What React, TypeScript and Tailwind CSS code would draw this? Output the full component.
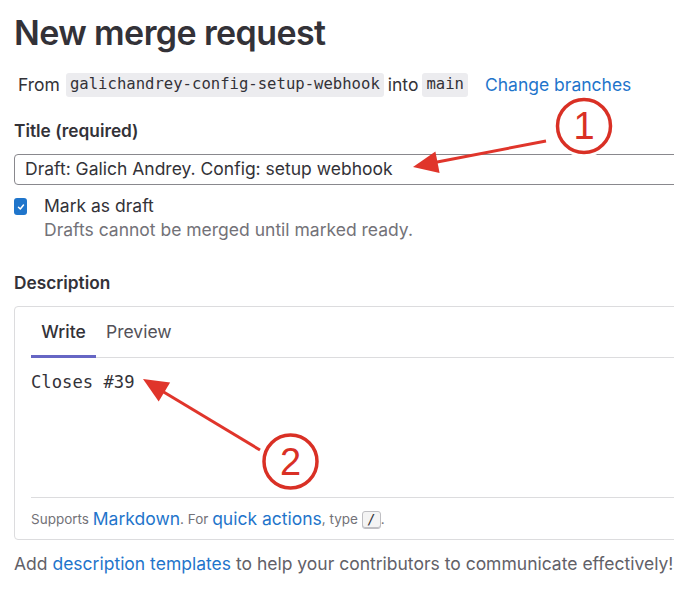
import React from "react";

export default function App() {
  return (
    <div className="relative w-[674px] h-[596px] overflow-hidden bg-white text-[#333238]" style={{ fontFamily: "Inter, 'Noto Sans', sans-serif" }}>
      <div className="w-[760px] pl-[14px]">
        <h1 className="mt-[13px] text-[34px] leading-[40px] font-semibold tracking-[-0.6px] text-[#333238]">New merge request</h1>
        <div className="mt-[20px] flex items-center h-[24px] text-[17.5px] text-[#333238] pl-[4px]">
          <span>From</span>
          <code className="ml-[6px] px-[4px] h-[24px] flex items-center rounded-[3px] bg-[#ececef] text-[15.6px]" style={{ fontFamily: "'DejaVu Sans Mono', monospace" }}>galichandrey-config-setup-webhook</code>
          <span className="ml-[4px]">into</span>
          <code className="ml-[4px] px-[4px] h-[24px] flex items-center rounded-[3px] bg-[#ececef] text-[15.6px]" style={{ fontFamily: "'DejaVu Sans Mono', monospace" }}>main</code>
          <span className="ml-[17px] text-[#1f75cb]">Change branches</span>
        </div>
        <div className="mt-[22px] text-[17.3px] leading-[24px] font-semibold">Title (required)</div>
        <div className="mt-[11px] h-[31px] border border-[#89888d] rounded-[4px] flex items-center pl-[10px] text-[17.5px] text-[#333238]">
          Draft: Galich Andrey. Config: setup webhook
        </div>
        <div className="mt-[9px] flex">
          <div className="mt-[4px] w-[13px] h-[17px] rounded-[3px] bg-[#1f75cb] flex items-center justify-center">
            <svg width="8" height="8" viewBox="0 0 8 8"><path d="M1.5 4.2 L3.3 6 L6.5 2" stroke="white" strokeWidth="1.5" fill="none" strokeLinecap="round" strokeLinejoin="round" /></svg>
          </div>
          <div className="ml-[17px]">
            <div className="text-[17.5px] leading-[24px]">Mark as draft</div>
            <div className="text-[17.5px] leading-[24px] text-[#737278]">Drafts cannot be merged until marked ready.</div>
          </div>
        </div>
        <div className="mt-[29px] text-[17.3px] leading-[24px] font-semibold">Description</div>
        <div className="mt-[11px] h-[234px] border border-[#dcdcde] rounded-[4px] flex flex-col pl-[16px]">
          <div className="h-[51px] border-b border-[#dcdcde] flex items-stretch text-[17.5px]">
            <div className="w-[65px] flex items-center justify-center border-b-[3px] border-[#6666c4] -mb-[1px] pt-[3px] font-medium">Write</div>
            <div className="px-[10px] flex items-center text-[#535158]">Preview</div>
          </div>
          <div className="flex-1 border-b border-[#dcdcde] pt-[12px] text-[17.2px]" style={{ fontFamily: "'DejaVu Sans Mono', monospace" }}>
            <span>Closes #39</span>
          </div>
          <div className="h-[41px] flex items-center pt-[2px] text-[13.5px] text-[#737278]">
            <span>Supports&nbsp;</span>
            <span className="text-[17.5px] text-[#1f75cb]">Markdown</span>
            <span>. For&nbsp;</span>
            <span className="text-[17.5px] text-[#1f75cb]">quick actions</span>
            <span>, type&nbsp;</span>
            <span className="inline-flex items-center justify-center w-[19px] h-[18px] border border-[#bfbfc3] rounded-[3px] bg-[#f4f4f4] text-[14px] text-[#333238] shadow-[inset_0_-1px_0_#bfbfc3]" style={{ fontFamily: "'DejaVu Sans Mono', monospace" }}>/</span>
            <span>.</span>
          </div>
        </div>
        <div className="mt-[12px] text-[17.5px] leading-[24px] text-[#626168] whitespace-nowrap">
          Add <span className="text-[#1f75cb]">description templates</span> to help your contributors to communicate effectively!
        </div>
      </div>

      <svg className="absolute inset-0 pointer-events-none" width="674" height="596" viewBox="0 0 674 596">
        <circle cx="584" cy="126" r="31" fill="white" />
        <circle cx="584" cy="126" r="26.5" fill="none" stroke="#d93025" strokeWidth="3.5" />
        <text x="584" y="139" textAnchor="middle" fill="#d93025" fontSize="38" fontFamily="'Liberation Sans', Arial, sans-serif">1</text>
        <line x1="546" y1="141" x2="432" y2="163" stroke="#e0352b" strokeWidth="3" />
        <polygon points="413,167 439.6,173 435.4,151.4" fill="#e0352b" />

        <circle cx="290.5" cy="461.5" r="26.5" fill="none" stroke="#d93025" strokeWidth="3.5" />
        <text x="290.5" y="475" textAnchor="middle" fill="#d93025" fontSize="38" fontFamily="'Liberation Sans', Arial, sans-serif">2</text>
        <line x1="260" y1="450" x2="162" y2="391" stroke="#e0352b" strokeWidth="3" />
        <polygon points="143,379 158.7,401.4 170.1,382.6" fill="#e0352b" />
      </svg>
    </div>
  );
}
